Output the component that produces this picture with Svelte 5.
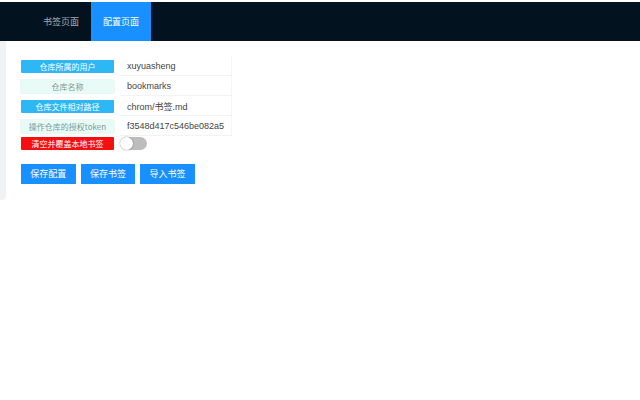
<script>
  const rows = [
    { label: '仓库所属的用户', value: 'xuyuasheng', kind: 'blue' },
    { label: '仓库名称', value: 'bookmarks', kind: 'mint' },
    { label: '仓库文件相对路径', value: 'chrom/书签.md', kind: 'blue' },
    { label: '操作仓库的授权token', value: 'f3548d417c546be082a5ec', kind: 'mint' }
  ];
  const buttons = ['保存配置', '保存书签', '导入书签'];
</script>

<div class="page">
  <nav class="nav">
    <div class="tab">书签页面</div>
    <div class="tab active">配置页面</div>
  </nav>
  <div class="body">
    <div class="rail"></div>
    <main class="main">
      <div class="rows">
        {#each rows as row}
          <div class="row">
            <div class="label {row.kind}">{row.label}</div>
            <input class="input" readonly value={row.value} />
          </div>
        {/each}
      </div>
      <div class="switchrow">
        <div class="label red">清空并覆盖本地书签</div>
        <div class="switch"><span class="knob"></span></div>
      </div>
      <div class="buttons">
        {#each buttons as b}
          <div class="btn">{b}</div>
        {/each}
      </div>
    </main>
  </div>
</div>

<style>
  :global(body) {
    margin: 0;
    background: #fff;
  }
  .page {
    width: 640px;
    height: 400px;
    overflow: hidden;
    padding-top: 2px;
    box-sizing: border-box;
    font-family: "Noto Sans CJK SC", "Liberation Sans", sans-serif;
  }
  .nav {
    height: 39px;
    background: #02121f;
    display: flex;
    padding-left: 31px;
  }
  .tab {
    width: 60px;
    line-height: 39px;
    text-align: center;
    font-size: 9px;
    color: rgba(255, 255, 255, 0.65);
  }
  .tab.active {
    background: #1890ff;
    color: #fff;
  }
  .body {
    display: flex;
  }
  .rail {
    width: 6px;
    height: 159px;
    background: #f0f2f5;
    border-bottom-right-radius: 4px;
  }
  .main {
    padding: 15px 0 0 15px;
  }
  .rows {
    width: 211px;
  }
  .row {
    display: flex;
    align-items: center;
    gap: 6px;
    height: 20px;
  }
  .label {
    flex: none;
    width: 93px;
    height: 13px;
    line-height: 13px;
    text-align: center;
    font-size: 8px;
    border-radius: 1px;
  }
  .blue {
    background: #2db7f5;
    color: #fff;
  }
  .mint {
    background: #e8fbf7;
    color: #7f9a94;
    box-shadow: 0 0 0 1px #e9f8f5;
  }
  .red {
    background: #f50f0f;
    color: #fff;
  }
  .input {
    flex: none;
    width: 112px;
    height: 20px;
    box-sizing: border-box;
    margin: 0;
    padding: 1px 7px 0;
    font-size: 9px;
    color: #444;
    background: #fff;
    border: 0;
    outline: 0;
    border-bottom: 1px solid #f3f3f3;
    border-right: 1px solid #f6f6f6;
    font-family: "Liberation Sans", "Noto Sans CJK SC", sans-serif;
  }
  .switchrow {
    display: flex;
    align-items: center;
    gap: 6px;
    height: 14px;
  }
  .switch {
    position: relative;
    width: 27px;
    height: 13px;
    border-radius: 7px;
    background: #bdbdbd;
  }
  .knob {
    position: absolute;
    left: 0;
    top: 0;
    width: 13px;
    height: 13px;
    border-radius: 50%;
    background: #fff;
    box-shadow: 0 0 2px rgba(0, 0, 0, 0.35);
  }
  .buttons {
    display: flex;
    gap: 5px;
    margin-top: 14px;
  }
  .btn {
    width: 54.6px;
    height: 20px;
    line-height: 20px;
    text-align: center;
    background: #1890ff;
    color: #fff;
    font-size: 9px;
  }
</style>
